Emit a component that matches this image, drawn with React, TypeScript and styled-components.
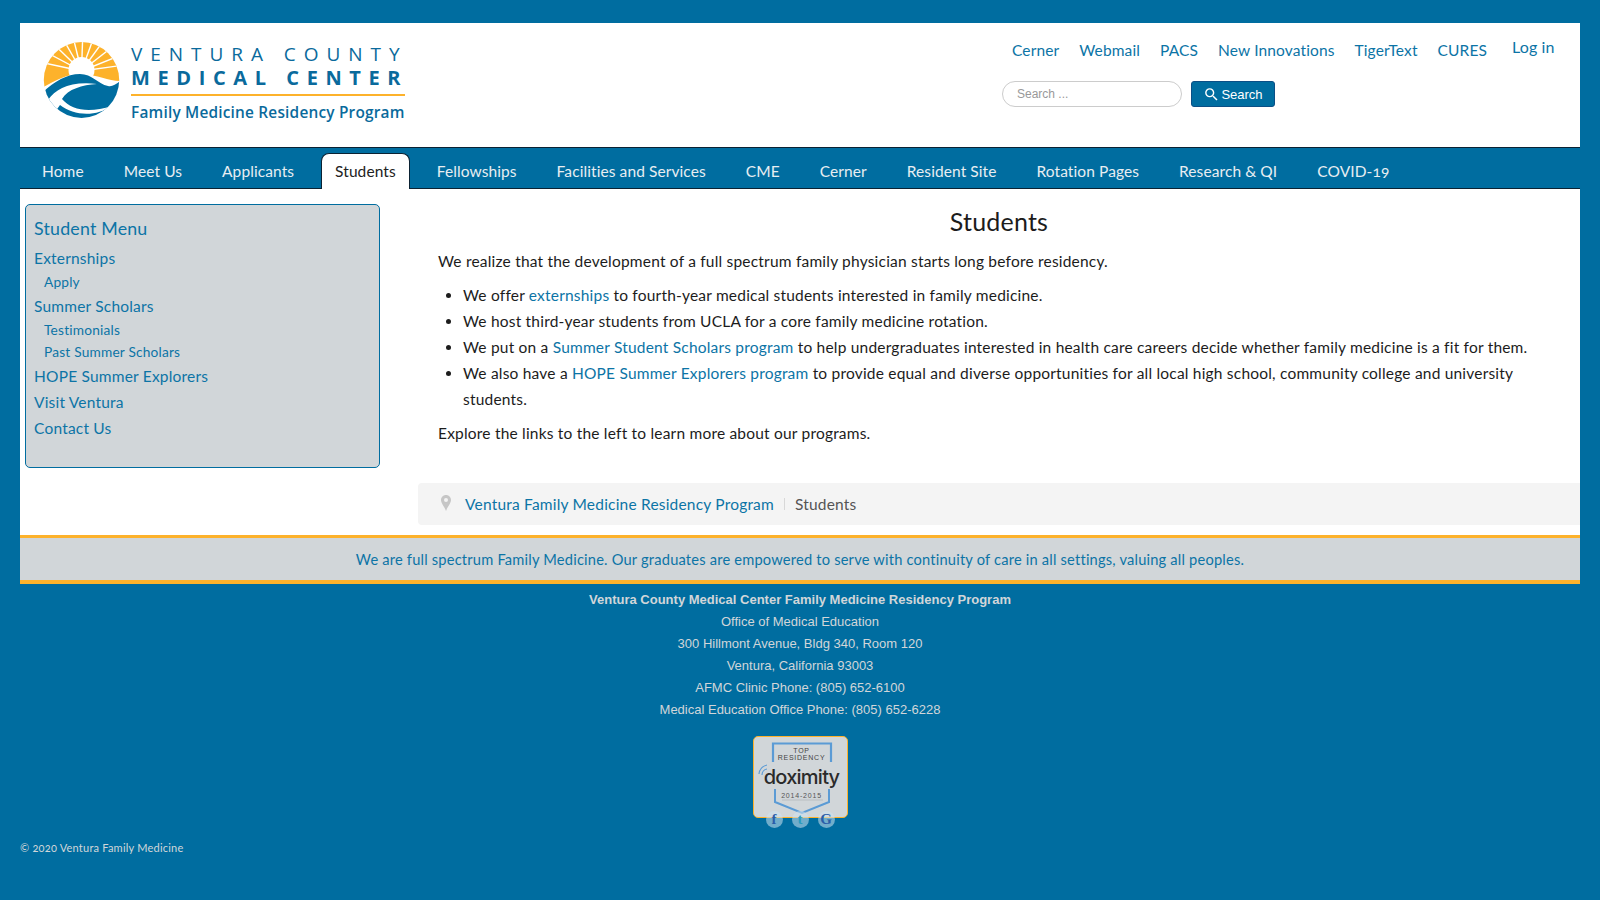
import React from 'react';
import styled, { createGlobalStyle } from 'styled-components';
import { MdSearch } from 'react-icons/md';

const BLUE = '#006da0';
const LINK = '#0c74a6';
const GOLD = '#fdb22b';
const BODY_FONT = "Lato, 'Open Sans', sans-serif";

const GlobalStyle = createGlobalStyle`
  html, body { margin: 0; padding: 0; }
  body {
    background: ${BLUE};
    font-family: ${BODY_FONT};
    font-size: 15.5px;
    letter-spacing: 0.2px;
    color: #1c1c1c;
    font-variant-numeric: oldstyle-nums;
  }
  a { color: ${LINK}; text-decoration: none; }
`;

const Page = styled.div`
  padding: 23px 20px 0;
  height: 877px;
`;

const Header = styled.header`
  background: #fff;
  height: 124px;
  display: flex;
  justify-content: space-between;
  border-bottom: 1px solid #0b2233;
`;

const Logo = styled.div`
  display: flex;
  align-items: center;
  gap: 7px;
  padding: 14px 0 0 20px;
  height: 86px;
`;

const LogoText = styled.div`
  display: flex;
  flex-direction: column;
  width: 274px;
  margin-top: 7px;
  color: #0a6a9c;
  font-family: 'Open Sans', sans-serif;
  white-space: nowrap;
`;

const LogoLine1 = styled.div`
  font-size: 19px;
  line-height: 23px;
  letter-spacing: 7.95px;
  font-weight: 400;
  margin-top: -2px;
`;

const LogoLine2 = styled.div`
  font-size: 20px;
  line-height: 24px;
  letter-spacing: 7.6px;
  font-weight: 700;
`;

const LogoRule = styled.div`
  height: 2px;
  background: ${GOLD};
  margin: 4px 0 6px;
`;

const LogoLine3 = styled.div`
  font-size: 15.4px;
  line-height: 21px;
  font-weight: 600;
`;

const HeaderRight = styled.div`
  width: 578px;
  padding-top: 14px;
  display: flex;
  flex-direction: column;
  gap: 18px;
`;

const TopLinks = styled.div`
  display: flex;
  align-items: flex-start;
  padding-left: 10px;
`;

const TopLink = styled.a`
  margin-right: 20px;
  line-height: 26px;
  letter-spacing: 0.13px;
`;

const LoginLink = styled.a`
  margin-left: 5px;
  line-height: 20px;
  font-size: 16px;
  letter-spacing: 0.1px;
`;

const SearchRow = styled.form`
  display: flex;
  gap: 9px;
  margin: 0;
`;

const SearchInput = styled.input`
  width: 180px;
  height: 26px;
  box-sizing: border-box;
  border: 1px solid #ccc;
  border-radius: 13px;
  padding: 0 14px;
  font: 12px 'Liberation Sans', sans-serif;
  &::placeholder { color: #999; opacity: 1; }
`;

const SearchButton = styled.button`
  width: 84px;
  height: 26px;
  box-sizing: border-box;
  display: flex;
  align-items: center;
  justify-content: center;
  gap: 1px;
  background: ${BLUE};
  color: #fff;
  border: 1px solid #0b4f86;
  border-radius: 3px;
  font: 13px 'Liberation Sans', sans-serif;
  padding: 0;
`;

const Nav = styled.nav`
  height: 40px;
  display: flex;
  align-items: flex-end;
  padding-left: 2px;
  border-bottom: 1px solid #0b2233;
`;

const NavItem = styled.a<{ $active?: boolean }>`
  display: block;
  box-sizing: border-box;
  height: ${(p) => (p.$active ? '36px' : '34px')};
  line-height: 34px;
  padding: 0 ${(p) => (p.$active ? '13px' : '20px')};
  margin: 0 ${(p) => (p.$active ? '7px' : '0')} ${(p) => (p.$active ? '-1px' : '0')};
  color: ${(p) => (p.$active ? '#222' : '#e8eef2')};
  background: ${(p) => (p.$active ? '#fff' : 'transparent')};
  border: ${(p) => (p.$active ? '1px solid #0b2233' : 'none')};
  border-bottom: none;
  border-radius: ${(p) => (p.$active ? '8px 8px 0 0' : '0')};
  letter-spacing: 0.09px;
  white-space: nowrap;
  z-index: 1;
`;

const Main = styled.main`
  background: #fff;
  height: 346px;
  display: flex;
`;

const Sidebar = styled.aside`
  width: 355px;
  height: 264px;
  box-sizing: border-box;
  margin: 15px 38px 0 5px;
  flex: none;
  background: #d1d6d9;
  border: 1px solid ${BLUE};
  border-radius: 5px;
  padding: 11px 8px;
`;

const SideTitle = styled.div`
  color: ${LINK};
  font-size: 17.8px;
  line-height: 24px;
  margin-bottom: 5px;
`;

const SideLink = styled.a<{ $sub?: boolean }>`
  display: block;
  font-size: ${(p) => (p.$sub ? '13.7px' : '15.5px')};
  line-height: ${(p) => (p.$sub ? '22px' : '26px')};
  padding-left: ${(p) => (p.$sub ? '10px' : '0')};
`;

const Content = styled.div`
  flex: 1;
  min-width: 0;
  display: flex;
  flex-direction: column;
`;

const Article = styled.article`
  padding: 15px 40px 0 20px;
  height: 294px;
  box-sizing: border-box;
  line-height: 26px;
`;

const Title = styled.h1`
  margin: 0 0 10px;
  text-align: center;
  font-size: 25px;
  line-height: 34px;
  font-weight: 400;
  padding-left: 20px;
`;

const Para = styled.p`
  margin: 0 0 8px;
`;

const List = styled.ul`
  margin: 0 0 8px;
  padding-left: 25px;
`;

const Crumbs = styled.div`
  height: 42px;
  background: #f4f4f4;
  border-radius: 4px 0 0 4px;
  display: flex;
  align-items: center;
  padding-left: 23px;
  color: #555;
`;

const CrumbIcon = styled.span`
  display: flex;
  width: 24px;
  margin-top: -3px;
`;

const CrumbSep = styled.span`
  width: 1px;
  height: 12px;
  background: #d8d8d8;
  margin: 0 10px;
`;

const Tagline = styled.div`
  background: #d1d6d9;
  border-top: 3px solid ${GOLD};
  border-bottom: 4px solid ${GOLD};
  height: 42px;
  line-height: 43px;
  text-align: center;
  color: ${LINK};
  font-size: 14.65px;
`;

const Footer = styled.footer`
  display: flex;
  flex-direction: column;
  align-items: center;
  padding-top: 5px;
  color: #d1d6d9;
  font: 13px/22px 'Liberation Sans', sans-serif;
  letter-spacing: 0;
`;

const FooterStrong = styled.div`
  font-weight: 700;
`;

const Badge = styled.div`
  width: 95px;
  height: 82px;
  box-sizing: border-box;
  margin-top: 15px;
  padding-left: 3px;
  background: #d1d6d9;
  border: 1px solid ${GOLD};
  border-radius: 5px;
  position: relative;
  display: flex;
  flex-direction: column;
  align-items: center;
  overflow: hidden;
`;

const BadgeShield = styled.svg`
  position: absolute;
  inset: -1px;
`;

const BadgeTop = styled.div`
  font: 7px/7px 'Liberation Sans', sans-serif;
  letter-spacing: 0.75px;
  color: #444;
  text-align: center;
  margin-top: 10px;
  z-index: 1;
`;

const BadgeName = styled.div`
  font: 500 20px/20px Inter, sans-serif;
  letter-spacing: -0.75px;
  color: #2a2a2a;
  margin-top: 6px;
  z-index: 1;
`;

const BadgeYears = styled.div`
  font: 7px/8px 'Liberation Sans', sans-serif;
  letter-spacing: 0.8px;
  color: #555;
  margin-top: 5px;
  z-index: 1;
`;

const Socials = styled.div`
  display: flex;
  gap: 9px;
  margin-top: -7px;
  z-index: 1;
`;

const Social = styled.span<{ $dim?: boolean }>`
  width: 17px;
  height: 17px;
  border-radius: 50%;
  background: rgba(205, 225, 238, 0.55);
  color: ${(p) => (p.$dim ? '#2b9cc0' : '#2a5da8')};
  display: flex;
  align-items: center;
  justify-content: center;
  font: 700 15px/17px 'Liberation Serif', serif;
`;

const Copyright = styled.div`
  margin-top: 12px;
  font-size: 11.05px;
  line-height: 16px;
  color: #d1d6d9;
`;

const rayAngles = [-168, -152, -136, -120, -104, -88, -70, -54, -38, -22, -8];

const SunLogo = () => (
  <svg width="84" height="86" viewBox="0 0 84 86">
    <defs>
      <clipPath id="disc">
        <ellipse cx="41.5" cy="43" rx="37.7" ry="38" />
      </clipPath>
    </defs>
    <g clipPath="url(#disc)">
      <rect width="84" height="86" fill="#fff" />
      <path d="M0 0 H84 V44 C70 45 60 38 41 37 C26 37 14 44 0 52 Z" fill={GOLD} />
      <g stroke="#fff" strokeWidth="1.4">
        {rayAngles.map((a) => (
          <line
            key={a}
            x1="41.5"
            y1="34"
            x2={41.5 + 50 * Math.cos((a * Math.PI) / 180)}
            y2={34 + 50 * Math.sin((a * Math.PI) / 180)}
          />
        ))}
      </g>
      <circle cx="41.5" cy="33" r="13" fill="#fff" />
      <path d="M0 58 C12 46 26 37 40 37 C52 37 58 47 68 49 C73 50 77 47 84 41 V86 H0 Z" fill={BLUE} />
      <path d="M8 63 C16 52 30 44 57 47 C42 48 28 52 22 62 C32 74 50 76 72 69 C56 80 34 79 20 68 L15 75 Z" fill="#fff" />
    </g>
  </svg>
);

const CrumbPin = () => (
  <svg width="10" height="16" viewBox="0 0 10 16">
    <path
      fillRule="evenodd"
      d="M5 0 C2.2 0 0 2.2 0 5 C0 8.5 3.5 11.5 5 16 C6.5 11.5 10 8.5 10 5 C10 2.2 7.8 0 5 0 Z M5 3 A2 2 0 1 1 5 7 A2 2 0 1 1 5 3 Z"
      fill="#c6c6c6"
    />
  </svg>
);

const topLinks = ['Cerner', 'Webmail', 'PACS', 'New Innovations', 'TigerText', 'CURES'];
const navItems = ['Home', 'Meet Us', 'Applicants', 'Students', 'Fellowships', 'Facilities and Services', 'CME', 'Cerner', 'Resident Site', 'Rotation Pages', 'Research & QI', 'COVID-19'];
const sideItems = [
  { label: 'Externships' },
  { label: 'Apply', sub: true },
  { label: 'Summer Scholars' },
  { label: 'Testimonials', sub: true },
  { label: 'Past Summer Scholars', sub: true },
  { label: 'HOPE Summer Explorers' },
  { label: 'Visit Ventura' },
  { label: 'Contact Us' },
];
const footerLines = [
  'Office of Medical Education',
  '300 Hillmont Avenue, Bldg 340, Room 120',
  'Ventura, California 93003',
  'AFMC Clinic Phone: (805) 652-6100',
  'Medical Education Office Phone: (805) 652-6228',
];

export default function App() {
  return (
    <Page>
      <GlobalStyle />
      <Header>
        <Logo>
          <SunLogo />
          <LogoText>
            <LogoLine1>VENTURA COUNTY</LogoLine1>
            <LogoLine2>MEDICAL CENTER</LogoLine2>
            <LogoRule />
            <LogoLine3>Family Medicine Residency Program</LogoLine3>
          </LogoText>
        </Logo>
        <HeaderRight>
          <TopLinks>
            {topLinks.map((l) => (
              <TopLink href="#" key={l}>{l}</TopLink>
            ))}
            <LoginLink href="#">Log in</LoginLink>
          </TopLinks>
          <SearchRow>
            <SearchInput placeholder="Search ..." />
            <SearchButton type="button">
              <MdSearch size={17} />
              Search
            </SearchButton>
          </SearchRow>
        </HeaderRight>
      </Header>
      <Nav>
        {navItems.map((n) => (
          <NavItem href="#" key={n} $active={n === 'Students'}>{n}</NavItem>
        ))}
      </Nav>
      <Main>
        <Sidebar>
          <SideTitle>Student Menu</SideTitle>
          {sideItems.map((s) => (
            <SideLink href="#" key={s.label} $sub={s.sub}>{s.label}</SideLink>
          ))}
        </Sidebar>
        <Content>
          <Article>
            <Title>Students</Title>
            <Para>We realize that the development of a full spectrum family physician starts long before residency.</Para>
            <List>
              <li>We offer <a href="#">externships</a> to fourth-year medical students interested in family medicine.</li>
              <li>We host third-year students from UCLA for a core family medicine rotation.</li>
              <li>We put on a <a href="#">Summer Student Scholars program</a> to help undergraduates interested in health care careers decide whether family medicine is a fit for them.</li>
              <li>We also have a <a href="#">HOPE Summer Explorers program</a> to provide equal and diverse opportunities for all local high school, community college and university students.</li>
            </List>
            <Para>Explore the links to the left to learn more about our programs.</Para>
          </Article>
          <Crumbs>
            <CrumbIcon><CrumbPin /></CrumbIcon>
            <a href="#">Ventura Family Medicine Residency Program</a>
            <CrumbSep />
            Students
          </Crumbs>
        </Content>
      </Main>
      <Tagline>We are full spectrum Family Medicine. Our graduates are empowered to serve with continuity of care in all settings, valuing all peoples.</Tagline>
      <Footer>
        <FooterStrong>Ventura County Medical Center Family Medicine Residency Program</FooterStrong>
        {footerLines.map((l) => (
          <div key={l}>{l}</div>
        ))}
        <Badge>
          <BadgeShield width="95" height="82" viewBox="0 0 95 82">
            <path d="M20 26 V7.5 H78 V26" fill="none" stroke="#5b9bd5" strokeWidth="2.2" />
            <path d="M22 53 V66 L49 77 L76 66 V53" fill="none" stroke="#5b9bd5" strokeWidth="2" />
            <path d="M29 64 H70" stroke="#b9bec2" strokeWidth="1" />
            <path d="M6 38 a10 10 0 0 1 8 -9 M9 39 a6 6 0 0 1 5 -6" fill="none" stroke="#5b9bd5" strokeWidth="1.2" />
          </BadgeShield>
          <BadgeTop>TOP<br />RESIDENCY</BadgeTop>
          <BadgeName>doximity</BadgeName>
          <BadgeYears>2014-2015</BadgeYears>
        </Badge>
        <Socials>
          <Social>f</Social>
          <Social $dim>t</Social>
          <Social>G</Social>
        </Socials>
      </Footer>
      <Copyright>© 2020 Ventura Family Medicine</Copyright>
    </Page>
  );
}
